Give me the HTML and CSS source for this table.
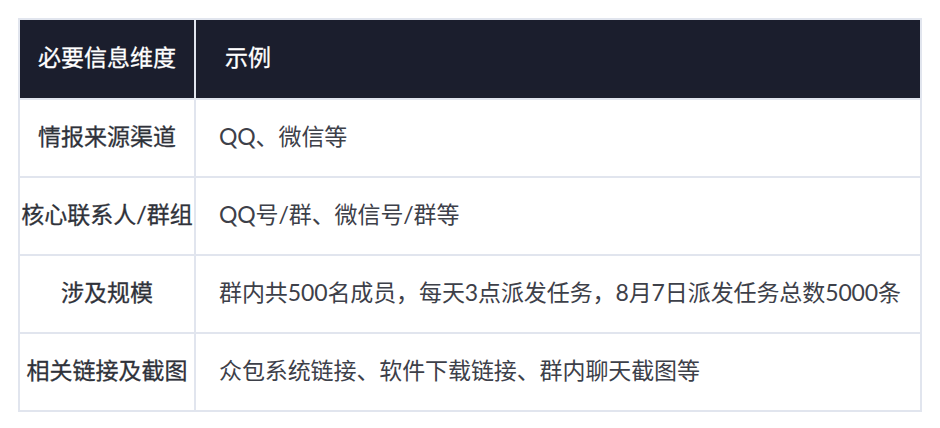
FILE: index.html
```html
<!DOCTYPE html>
<html lang="zh">
<head>
<meta charset="utf-8">
<link rel="stylesheet" href="styles.css">
</head>
<body>
<div class="wrap">
<table class="info">
  <thead>
    <tr><th class="dim">必要信息维度</th><th class="ex">示例</th></tr>
  </thead>
  <tbody>
    <tr><td class="dim">情报来源渠道</td><td class="ex">QQ、微信等</td></tr>
    <tr><td class="dim">核心联系人/群组</td><td class="ex">QQ号/群、微信号/群等</td></tr>
    <tr><td class="dim">涉及规模</td><td class="ex">群内共500名成员，每天3点派发任务，8月7日派发任务总数5000条</td></tr>
    <tr><td class="dim">相关链接及截图</td><td class="ex">众包系统链接、软件下载链接、群内聊天截图等</td></tr>
  </tbody>
</table>
</div>
</body>
</html>
```
FILE: styles.css
```css
html, body {
  margin: 0;
  padding: 0;
  background: #ffffff;
}
.wrap {
  padding: 18px;
}
.info {
  width: 904px;
  border-collapse: collapse;
  border: 2px solid #e1e5ee;
  font-family: Lato, "Noto Sans CJK SC", sans-serif;
  font-size: 23px;
  line-height: 1.3;
}
.info th, .info td {
  border: 2px solid #e1e5ee;
  padding: 0 0 2px 0;
}
.info th {
  background: #1b1e2d;
  color: #ffffff;
  font-weight: 400;
  -webkit-text-stroke: 0.3px #ffffff;
  height: 76px;
  text-align: left;
}
.info td {
  height: 74px;
  color: #3d4049;
}
.info .dim {
  width: 174px;
  text-align: center;
}
.info th.ex {
  padding-left: 29px;
}
.info td.dim {
  font-weight: 400;
  color: #2f323a;
  -webkit-text-stroke: 0.3px #2f323a;
}
.info td.ex {
  padding-left: 23px;
  letter-spacing: -0.1px;
}
```
